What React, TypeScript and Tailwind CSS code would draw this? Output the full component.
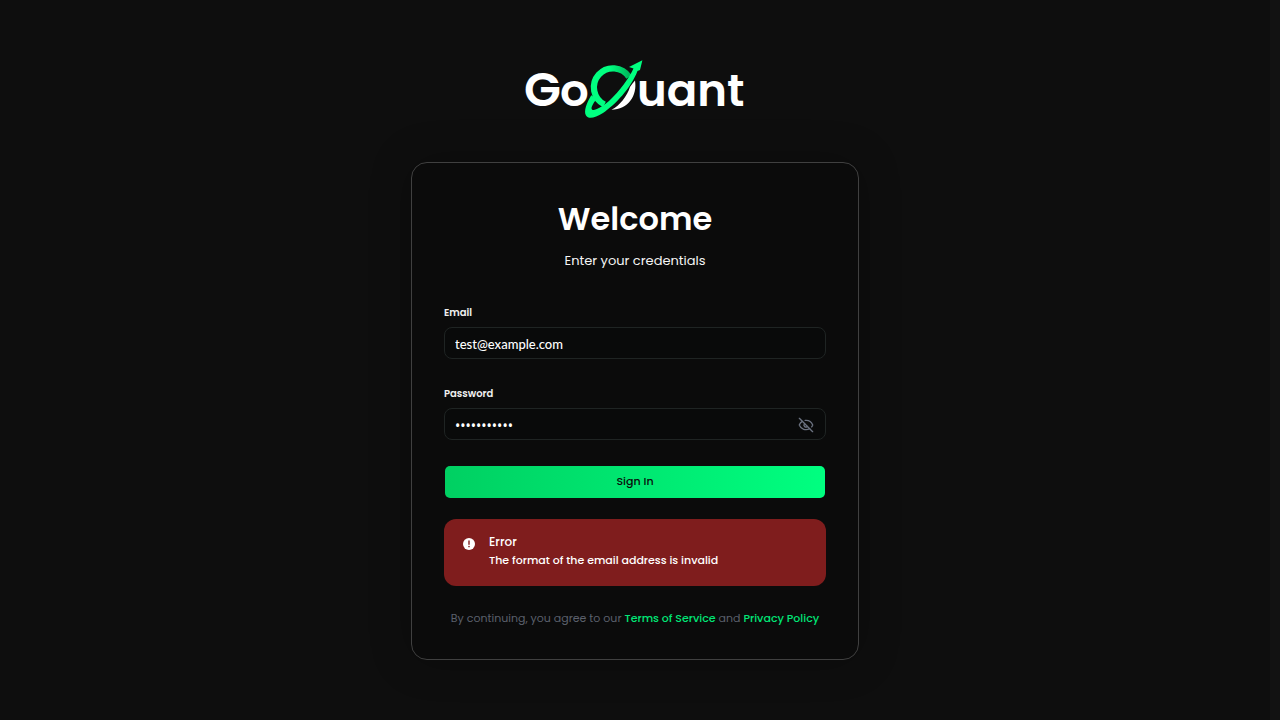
import { useState } from "react";
import { EyeOff } from "lucide-react";

function Logo() {
  return (
    <svg viewBox="0 0 220 60" className="h-[60px] w-[220px] overflow-visible" role="img" aria-label="GoQuant">
      <defs>
        <linearGradient id="ring" x1="0" y1="0" x2="1" y2="0">
          <stop offset="0.45" stopColor="#00ff80" />
          <stop offset="1" stopColor="#00b85c" />
        </linearGradient>
      </defs>
      <g fill="#ffffff" fontFamily="Poppins, Inter, sans-serif" fontWeight="600">
        <text x="-1" y="46" fontSize="48">G</text>
        <text x="35" y="46" fontSize="45">o</text>
        <text x="112" y="46" fontSize="45">uant</text>
      </g>
      <path d="M110 20.500C112.500 36 103 49.500 86.500 49.700C95 45.500 102 36 105 27C106.500 24.500 108.500 22.500 110 20.500Z" fill="#ffffff" />
      <path
        d="M104 17A19.100 19.100 0 1 0 79.400 44.500"
        fill="none"
        stroke="url(#ring)"
        strokeWidth="6.300"
      />
      <path
        d="M117.400 0.300L104 7L108.500 8.500C104 18 95 31 84 41C76 47.500 69 51.500 67 49.500C65.500 48 68 43.500 71.500 39L66.300 35.300C61.500 43 58.500 51.500 61 55.500C63.500 59.500 70 58 78 53C90 45 106 28 112.500 11L115 10Z"
        fill="#00ff80"
      />
    </svg>
  );
}

function AlertIcon() {
  return (
    <svg viewBox="0 0 12 12" className="size-3 shrink-0" aria-hidden="true">
      <circle cx="6" cy="6" r="6" fill="#ffffff" />
      <path d="M6 3V6.200" stroke="#7f1d1d" strokeWidth="1.400" strokeLinecap="round" />
      <circle cx="6" cy="8.600" r="0.800" fill="#7f1d1d" />
    </svg>
  );
}

const labelClass = "block text-[10px] leading-4 font-semibold text-[#f0f0f0]";
const fieldClass =
  "mt-1.5 block h-8 w-full rounded-lg border border-[#1f2423] bg-[#090a0a] px-2.5 pt-0.5 text-white outline-none focus:border-[#00d062]";

export default function App() {
  const [email, setEmail] = useState("test@example.com");
  const [password, setPassword] = useState("password123");
  const [visible, setVisible] = useState(false);

  return (
    <div className="flex min-h-screen bg-[#0e0e0e] font-[Poppins,Inter,sans-serif] text-white">
      <main className="flex min-w-0 flex-1 flex-col items-center px-4 pt-15 pb-14">
        <Logo />
        <section className="mt-[42px] w-full max-w-md rounded-2xl border border-[#404040] bg-[#0b0b0b] px-8 pt-8 pb-[31px] shadow-[0_0_40px_rgba(0,0,0,0.25)]">
          <h1 className="text-center text-[32px] leading-12 font-semibold">Welcome</h1>
          <p className="mt-2 text-center text-[13px] leading-5 text-[#f5f5f5]">Enter your credentials</p>

          <form className="mt-[34px]" onSubmit={(event) => event.preventDefault()}>
            <label htmlFor="email" className={labelClass}>
              Email
            </label>
            <input
              id="email"
              type="email"
              value={email}
              onChange={(event) => setEmail(event.target.value)}
              className={fieldClass + " font-[Lato,sans-serif] text-[13px] font-medium"}
            />
            <label htmlFor="password" className={labelClass + " mt-[27px]"}>
              Password
            </label>
            <div className="relative">
              <input
                id="password"
                type={visible ? "text" : "password"}
                value={password}
                onChange={(event) => setPassword(event.target.value)}
                className={fieldClass + " pr-10 font-['Noto_Sans',sans-serif] text-[14px]"}
              />
              <button
                type="button"
                aria-label="Show password"
                onClick={() => setVisible(!visible)}
                className="absolute inset-y-0 right-3 flex items-center pt-px text-[#6b7280]"
              >
                <EyeOff size={16} />
              </button>
            </div>
            <button
              type="submit"
              className="mt-[25px] block h-[34px] w-full rounded-md border border-transparent bg-linear-to-r from-[#00d062] to-[#00ff80] bg-clip-padding pb-0.5 text-[11px] font-medium text-[#0b0b0b]"
            >
              Sign In
            </button>
          </form>

          <div role="alert" className="mt-5 flex gap-3.5 rounded-xl bg-[#7f1d1d] px-[19px] pt-3.5 pb-4">
            <div className="pt-[5px]">
              <AlertIcon />
            </div>
            <div>
              <p className="text-[12px] leading-[18px] font-medium">Error</p>
              <p className="text-[11px] leading-[19px] font-medium">The format of the email address is invalid</p>
            </div>
          </div>

          <p className="mt-[22px] text-center text-[11px] leading-5 text-[#5b606b]">
            By continuing, you agree to our{" "}
            <a href="#terms" className="font-medium text-[#00e676]">Terms of Service</a> and{" "}
            <a href="#privacy" className="font-medium text-[#00e676]">Privacy Policy</a>
          </p>
        </section>
      </main>
      <div className="w-2.5 shrink-0 bg-[#121212]" aria-hidden="true" />
    </div>
  );
}
